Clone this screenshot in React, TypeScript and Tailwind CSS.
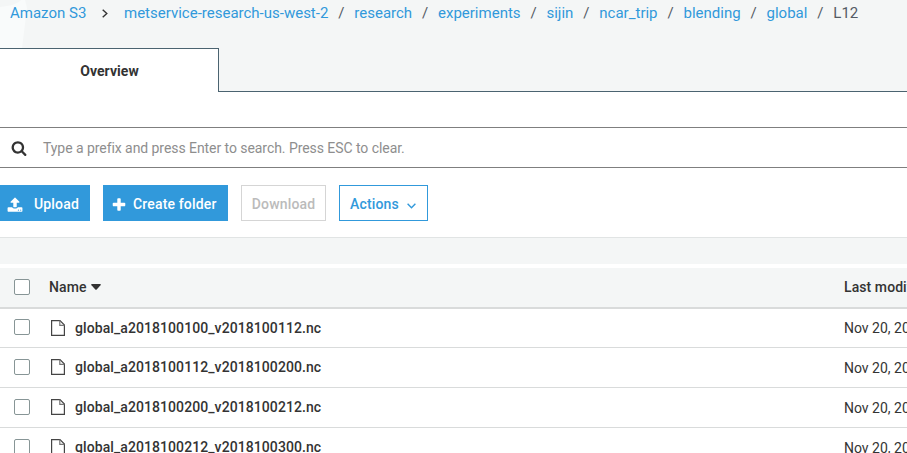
import { Fragment } from "react";

const path = ["metservice-research-us-west-2", "research", "experiments", "sijin", "ncar_trip", "blending", "global"];

const files = [
  "global_a2018100100_v2018100112.nc",
  "global_a2018100112_v2018100200.nc",
  "global_a2018100200_v2018100212.nc",
  "global_a2018100212_v2018100300.nc",
];

function Glyph({ d, className }: { d: string; className: string }) {
  return (
    <svg viewBox="0 0 1792 1792" fill="currentColor" className={`shrink-0 ${className}`}>
      <path d={d} />
    </svg>
  );
}

const SEARCH =
  "M1216 832q0-185-131.5-316.5t-316.5-131.5-316.5 131.5-131.5 316.5 131.5 316.5 316.5 131.5 316.5-131.5 131.5-316.5zm512 832q0 52-38 90t-90 38q-54 0-90-38l-343-342q-179 124-399 124-143 0-273.5-55.5t-225-150-150-225-55.5-273.5 55.5-273.5 150-225 225-150 273.5-55.5 273.5 55.5 225 150 150 225 55.5 273.5q0 220-124 399l343 343q37 37 37 90z";
const UPLOAD =
  "M1344 1472q0-26-19-45t-45-19-45 19-19 45 19 45 45 19 45-19 19-45zm256 0q0-26-19-45t-45-19-45 19-19 45 19 45 45 19 45-19 19-45zm128-224v320q0 40-28 68t-68 28h-1472q-40 0-68-28t-28-68v-320q0-40 28-68t68-28h427q21 56 70.5 92t110.5 36h256q61 0 110.5-36t70.5-92h427q40 0 68 28t28 68zm-325-648q-17 40-59 40h-256v448q0 26-19 45t-45 19h-256q-26 0-45-19t-19-45v-448h-256q-42 0-59-40-17-39 14-69l448-448q18-19 45-19t45 19l448 448q31 30 14 69z";
const PLUS =
  "M1600 736v192q0 40-28 68t-68 28h-416v416q0 40-28 68t-68 28h-192q-40 0-68-28t-28-68v-416h-416q-40 0-68-28t-28-68v-192q0-40 28-68t68-28h416v-416q0-40 28-68t68-28h192q40 0 68 28t28 68v416h416q40 0 68 28t28 68z";

function Checkbox() {
  return <span className="mb-px ml-[14px] size-4 shrink-0 rounded-[2px] border border-[#879596] bg-white" />;
}

export default function App() {
  return (
    <div className="h-[453px] w-[907px] overflow-hidden bg-white font-['Roboto','Liberation_Sans',sans-serif] text-sm text-[#333]">
      <header className="relative flex h-[92px] flex-col justify-between bg-[#f4f6f6]">
        <svg className="absolute top-0 left-0 h-12 w-[30px]" viewBox="0 0 30 48" fill="#f9fbfb">
          <path d="M0 7C10 6 17 4 21 0H25L27 8L22 48H0Z" />
        </svg>
        <nav className="relative flex h-[28px] items-center pl-[10px] text-[15px] whitespace-pre text-[#545b64]">
          <a className="w-[92px] text-[#3199db]">Amazon S3</a>
          <svg className="mr-[16px] mb-px h-[9px] w-[6px]" viewBox="0 0 6 9" fill="none" stroke="#333" strokeWidth="1.4">
            <path d="M0.7 0.7L4.8 4.5L0.7 8.3" />
          </svg>
          {path.map((p) => (
            <Fragment key={p}>
              <a className="text-[#3199db]">{p}</a>
              <span className="px-[9.87px]">/</span>
            </Fragment>
          ))}
          <span>L12</span>
        </nav>
        <div className="relative flex h-11">
          <div className="flex w-[219px] items-center justify-center border-t border-r border-[#4b6370] bg-white pl-px font-bold tracking-[0.05px]">
            Overview
          </div>
          <div className="flex-1 border-b border-[#4b6370]" />
        </div>
      </header>

      <div className="mt-[35px] flex h-[41px] items-center border-y border-[#7f7f7f] pl-[11px] tracking-[-0.06px] text-[#8e8e8e]">
        <Glyph d={SEARCH} className="mr-[16px] size-4 text-[#333]" />
        Type a prefix and press Enter to search. Press ESC to clear.
      </div>

      <div className="mt-[17px] flex h-9 gap-[13px] font-medium tracking-[0.16px]">
        <button className="flex w-[90px] items-center bg-[#3199db] pt-[2px] pl-[7px] text-white">
          <Glyph d={UPLOAD} className="mt-px mr-[11px] size-4" />
          Upload
        </button>
        <button className="flex w-[125px] items-center bg-[#3199db] pt-[2px] pl-[8px] text-white">
          <Glyph d={PLUS} className="mt-px mr-[6px] size-4" />
          Create folder
        </button>
        <button className="flex w-[85px] items-center justify-center border border-[#d5d5d5] pt-[2px] text-[#bbb]">Download</button>
        <button className="flex w-[89px] items-center border border-[#3199db] pt-[2px] pl-[10px] text-[#3199db]">
          Actions
          <svg className="mt-[3px] ml-[8px] h-[6px] w-[9px]" viewBox="0 0 9 6" fill="none" stroke="currentColor" strokeWidth="1.4">
            <path d="M0.6 0.8L4.5 4.7L8.4 0.8" />
          </svg>
        </button>
      </div>

      <div className="mt-4 h-[27px] border-t border-[#e1e4e4] bg-[#f4f6f6]" />

      <div className="mt-1 -mb-px flex h-[41px] items-center border-b-2 border-[#d9dbdb] bg-[#f4f6f6] font-medium tracking-[0.08px]">
        <Checkbox />
        <span className="mb-px ml-[19px]">Name</span>
        <svg className="mb-px ml-[4px] h-[6px] w-[10px]" viewBox="0 0 10 6" fill="#333">
          <path d="M0.8 0H9.2Q10.3 0.2 9.5 1.2L5.7 5.4Q5 6 4.3 5.4L0.5 1.2Q-0.3 0.2 0.8 0Z" />
        </svg>
        <span className="mb-px ml-auto w-[63px] whitespace-nowrap">Last modified</span>
      </div>
      {files.map((f, i) => (
        <div key={f} className="flex h-10 items-center border-b border-[#d9dbdb]">
          <Checkbox />
          <div className={`ml-[21px] flex items-center ${i === 0 ? "mt-px" : "mb-px"}`}>
            <svg className="h-4 w-[14px]" viewBox="0 0 14 16" fill="none" stroke="#444" strokeWidth="1.2">
              <path d="M0.6 0.6H9L13.4 5V15.4H0.6Z" />
              <path d="M8.8 0.6V5.3H13.4" stroke="#777" />
            </svg>
            <span className="ml-[10px] font-medium tracking-[0.08px]">{f}</span>
          </div>
          <span className="ml-auto w-[63px] whitespace-nowrap">Nov 20, 2018</span>
        </div>
      ))}
    </div>
  );
}
